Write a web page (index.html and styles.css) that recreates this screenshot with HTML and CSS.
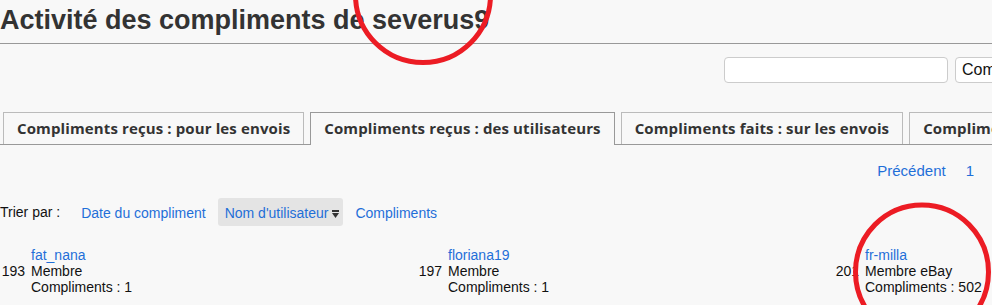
FILE: index.html
```html
<!DOCTYPE html>
<html lang="fr">
<head>
    <meta charset="UTF-8">
    <title>Activité des compliments</title>
    <link rel="stylesheet" href="styles.css">
</head>
<body>
    <div class="page">
        <h1 class="title">Activité des compliments de severus9</h1>

        <form class="search-row">
            <input type="text" class="search-input">
            <button type="button" class="search-btn">Comparer</button>
        </form>

        <ul class="tabs">
            <li class="tab">Compliments reçus : pour les envois</li>
            <li class="tab active">Compliments reçus : des utilisateurs</li>
            <li class="tab">Compliments faits : sur les envois</li>
            <li class="tab">Compliments faits : aux utilisateurs</li>
        </ul>

        <div class="pager">
            <a href="#">Précédent</a>
            <a href="#">1</a>
        </div>

        <div class="sort-row">
            <span class="sort-label">Trier par :</span>
            <a href="#" class="sort-link">Date du compliment</a>
            <a href="#" class="sort-link current">Nom d'utilisateur
                <svg class="sort-icon" width="7" height="8" viewBox="0 0 7 8">
                    <rect x="0" y="0" width="7" height="2" fill="#333"/>
                    <path d="M0 3 L7 3 L3.5 8 Z" fill="#333"/>
                </svg>
            </a>
            <a href="#" class="sort-link">Compliments</a>
        </div>

        <div class="members">
            <div class="member">
                <div class="member-num">193</div>
                <div class="member-info">
                    <a href="#">fat_nana</a>
                    <div>Membre</div>
                    <div>Compliments : 1</div>
                </div>
            </div>
            <div class="member">
                <div class="member-num">197</div>
                <div class="member-info">
                    <a href="#">floriana19</a>
                    <div>Membre</div>
                    <div>Compliments : 1</div>
                </div>
            </div>
            <div class="member">
                <div class="member-num">201</div>
                <div class="member-info">
                    <a href="#">fr-milla</a>
                    <div>Membre eBay</div>
                    <div>Compliments : 502</div>
                </div>
            </div>
        </div>
    </div>

    <!-- red marker circles drawn over the screenshot -->
    <svg class="marks" width="992" height="305" viewBox="0 0 992 305">
        <ellipse cx="423" cy="-5" rx="67.5" ry="67.5" fill="none" stroke="#ec1c24" stroke-width="5"/>
        <ellipse cx="922" cy="272" rx="66.5" ry="67" fill="none" stroke="#ec1c24" stroke-width="5"/>
    </svg>
</body>
</html>
```

FILE: styles.css
```css
* {
    margin: 0;
    padding: 0;
    box-sizing: border-box;
}

html, body {
    overflow: hidden;
}

body {
    font-family: "Liberation Sans", Arial, sans-serif;
    font-size: 14px;
    color: #111;
    background: #f8f8f8;
    position: relative;
    height: 305px;
}

a {
    color: #1f6fd8;
    text-decoration: none;
}

.page {
    width: 992px;
}

.title {
    font-size: 27px;
    line-height: 32px;
    font-weight: bold;
    color: #333;
    padding: 4px 0 7px;
    border-bottom: 1px solid #999;
}

.search-row {
    display: flex;
    justify-content: flex-end;
    gap: 7px;
    margin-top: 13px;
    margin-right: -88px;
}

.search-input {
    width: 224px;
    height: 26px;
    background: #fff;
    border: 1px solid #ccc;
    border-radius: 4px;
}

.search-btn {
    width: 125px;
    height: 26px;
    background: #fff;
    border: 1px solid #ccc;
    border-radius: 4px;
    font-family: "Liberation Sans", Arial, sans-serif;
    font-size: 16px;
    color: #111;
    text-align: left;
    padding-left: 6px;
}

.tabs {
    list-style: none;
    display: flex;
    gap: 6px;
    margin-top: 29px;
    padding-left: 3px;
    border-bottom: 1px solid #999;
    width: 1400px;
}

.tab {
    flex-shrink: 0;
    height: 32px;
    padding: 0 13px;
    border: 1px solid #bbb;
    border-bottom: none;
    font-family: "Open Sans", sans-serif;
    font-weight: 700;
    font-size: 15px;
    letter-spacing: 0.12px;
    line-height: 31px;
    color: #333;
    white-space: nowrap;
}

.tab.active {
    border-color: #999;
    height: 33px;
    margin-bottom: -1px;
    background: #f8f8f8;
}

.pager {
    display: flex;
    justify-content: flex-end;
    gap: 20px;
    margin-top: 17px;
    padding-right: 18px;
    font-size: 15px;
    line-height: 18px;
}

.sort-row {
    display: flex;
    align-items: center;
    gap: 5px;
    margin-top: 18px;
}

.sort-label {
    margin-right: 9px;
}

.sort-link {
    height: 28px;
    padding: 2px 7px 0;
    line-height: 26px;
    border-radius: 3px;
    white-space: nowrap;
}

.sort-link.current {
    background: #e4e4e4;
    padding-right: 4px;
}

.members {
    display: flex;
    margin-top: 21px;
    line-height: 16px;
}

.member {
    flex: 0 0 417px;
    display: flex;
    align-items: center;
    gap: 6px;
}

.member-num {
    width: 25px;
    text-align: right;
}

.member-info a {
    display: block;
}

.marks {
    position: absolute;
    top: 0;
    left: 0;
    pointer-events: none;
}
```
